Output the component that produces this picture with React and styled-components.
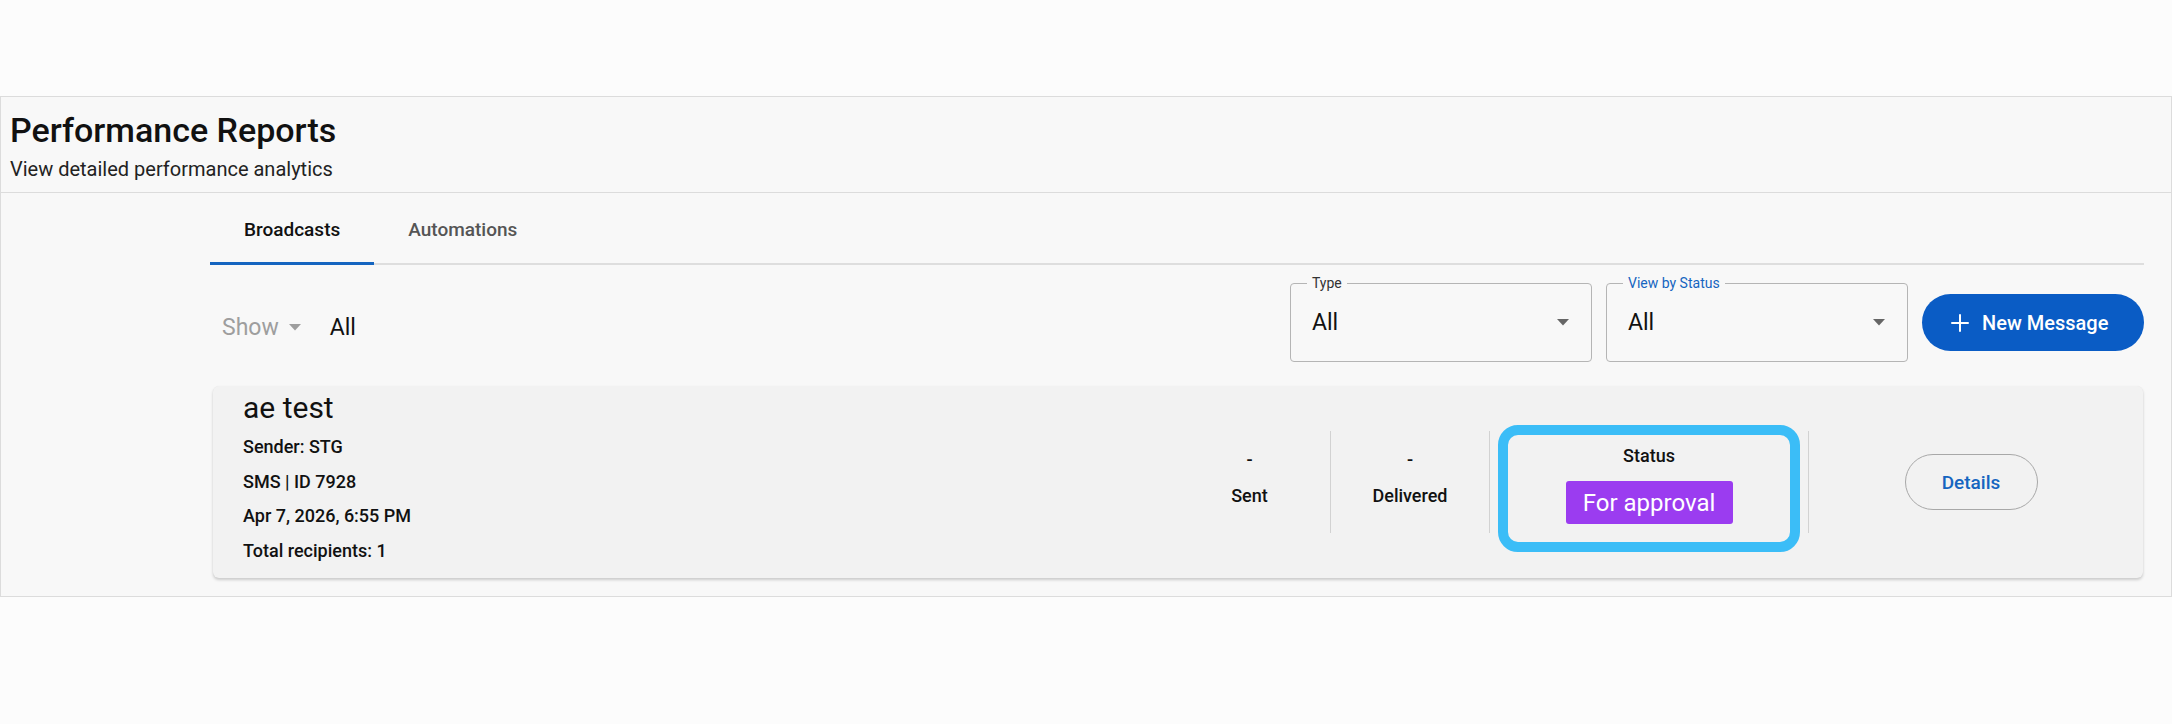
import React from 'react'
import styled, { createGlobalStyle } from 'styled-components'

const GlobalStyle = createGlobalStyle`
  html, body {
    margin: 0;
    padding: 0;
    background: #fcfcfc;
    font-family: Roboto, "Liberation Sans", Arial, sans-serif;
    color: #111;
  }
`

const report = {
  name: 'ae test',
  sender: 'STG',
  channel: 'SMS',
  id: 7928,
  sentAt: 'Apr 7, 2026, 6:55 PM',
  recipients: 1,
  sent: '-',
  delivered: '-',
  status: 'For approval',
}

const CaretDown = ({ color = '#666' }) => (
  <svg width="12" height="7" viewBox="0 0 12 7">
    <path d="M0 0 L12 0 L6 6.5 Z" fill={color} />
  </svg>
)

const PlusIcon = () => (
  <svg width="18" height="18" viewBox="0 0 18 18">
    <path d="M9 1 V17 M1 9 H17" stroke="#fff" strokeWidth="2" strokeLinecap="round" />
  </svg>
)

const App = () => {
  const [tab, setTab] = React.useState('broadcasts')

  return (
    <>
      <GlobalStyle />
      <Panel>
        <Header>
          <Title>Performance Reports</Title>
          <Subtitle>View detailed performance analytics</Subtitle>
        </Header>
        <Content>
          <TabBar>
            <Tab active={tab === 'broadcasts'} onClick={() => setTab('broadcasts')}>Broadcasts</Tab>
            <Tab active={tab === 'automations'} onClick={() => setTab('automations')}>Automations</Tab>
          </TabBar>

          <Toolbar>
            <ShowFilter>
              <ShowLabel>Show</ShowLabel>
              <CaretDown color="#9e9e9e" />
              <ShowValue>All</ShowValue>
            </ShowFilter>
            <Controls>
              <Selects>
                <Select>
                  <Legend>Type</Legend>
                  <SelectValue>All</SelectValue>
                  <CaretDown />
                </Select>
                <Select>
                  <Legend focused>View by Status</Legend>
                  <SelectValue>All</SelectValue>
                  <CaretDown />
                </Select>
              </Selects>
              <PrimaryButton>
                <PlusIcon />
                New Message
              </PrimaryButton>
            </Controls>
          </Toolbar>

          <Card>
            <Info>
              <Name>{report.name}</Name>
              <Meta>Sender: {report.sender}</Meta>
              <Meta>{report.channel} | ID {report.id}</Meta>
              <Meta>{report.sentAt}</Meta>
              <Meta>Total recipients: {report.recipients}</Meta>
            </Info>
            <Stat width={161}>
              <span>{report.sent}</span>
              <span>Sent</span>
            </Stat>
            <Divider />
            <Stat width={158}>
              <span>{report.delivered}</span>
              <span>Delivered</span>
            </Stat>
            <Divider />
            <StatusCell>
              <StatusBox>
                <StatusLabel>Status</StatusLabel>
                <Badge>{report.status}</Badge>
              </StatusBox>
            </StatusCell>
            <Divider />
            <Actions>
              <OutlineButton>Details</OutlineButton>
            </Actions>
          </Card>
        </Content>
      </Panel>
    </>
  )
}

const Panel = styled('div')`
  margin-top: 96px;
  background: #f8f8f8;
  border: 1px solid #dcdcdc;
  padding-bottom: 18px;
`

const Header = styled('div')`
  padding: 13px 9px 11px 9px;
  border-bottom: 1px solid #dcdcdc;
`

const Title = styled('h1')`
  margin: 0;
  font-size: 34px;
  line-height: 40px;
  font-weight: 500;
  color: #111;
`

const Subtitle = styled('div')`
  margin-top: 7px;
  font-size: 20px;
  line-height: 24px;
  color: #222;
`

const Content = styled('div')`
  padding: 0 27px 0 209px;
`

const TabBar = styled('div')`
  display: flex;
  padding-top: 26px;
  border-bottom: 2px solid #dedede;
`

const Tab = styled('div')`
  padding: 0 34px 21px 34px;
  font-size: 19px;
  line-height: 22px;
  font-weight: 500;
  color: ${(props) => (props.active ? '#111' : '#555')};
  border-bottom: 3px solid ${(props) => (props.active ? '#1565c0' : 'transparent')};
  margin-bottom: -2px;
  cursor: pointer;
`

const Toolbar = styled('div')`
  display: flex;
  align-items: center;
  justify-content: space-between;
  margin-top: 18px;
`

const ShowFilter = styled('div')`
  display: flex;
  align-items: center;
  gap: 10px;
  padding-left: 12px;
  padding-top: 9px;
`

const ShowLabel = styled('span')`
  font-size: 23px;
  color: #9e9e9e;
`

const ShowValue = styled('span')`
  margin-left: 19px;
  font-size: 23px;
  color: #111;
`

const Controls = styled('div')`
  display: flex;
  align-items: center;
  gap: 14px;
`

const Selects = styled('div')`
  display: flex;
  gap: 14px;
`

const Select = styled('div')`
  position: relative;
  width: 302px;
  height: 79px;
  box-sizing: border-box;
  border: 1px solid #b5b5b5;
  border-radius: 4px;
  display: flex;
  align-items: center;
  justify-content: space-between;
  padding: 0 22px 0 21px;
`

const Legend = styled('span')`
  position: absolute;
  top: -9px;
  left: 16px;
  padding: 0 5px;
  background: #f8f8f8;
  font-size: 14px;
  line-height: 16px;
  color: ${(props) => (props.focused ? '#1565c0' : '#333')};
`

const SelectValue = styled('span')`
  font-size: 23px;
  color: #111;
`

const PrimaryButton = styled('button')`
  display: flex;
  align-items: center;
  gap: 13px;
  width: 222px;
  height: 57px;
  padding: 0 0 0 29px;
  border: none;
  border-radius: 29px;
  background: #0a5cc5;
  color: #fff;
  font-family: inherit;
  font-size: 20px;
  font-weight: 500;
  cursor: pointer;
`

const Card = styled('div')`
  display: flex;
  align-items: center;
  margin: 24px 1px 0 3px;
  height: 192px;
  box-sizing: border-box;
  padding-left: 30px;
  background: #f2f2f2;
  border-radius: 6px;
  box-shadow: 0 2px 3px rgba(0, 0, 0, 0.18), 0 0 1px rgba(0, 0, 0, 0.06);
`

const Info = styled('div')`
  flex: 1;
  align-self: stretch;
  padding-top: 4px;
`

const Name = styled('div')`
  font-size: 30px;
  line-height: 36px;
  color: #111;
  margin-bottom: 4px;
`

const Meta = styled('div')`
  font-size: 18px;
  line-height: 34.5px;
  font-weight: 500;
  color: #111;
`

const Stat = styled('div')`
  width: ${(props) => props.width}px;
  display: flex;
  flex-direction: column;
  align-items: center;
  font-size: 18px;
  line-height: 36px;
  font-weight: 500;
  margin-bottom: 8px;
`

const Divider = styled('div')`
  width: 1px;
  height: 102px;
  background: #d2d2d2;
`

const StatusCell = styled('div')`
  width: 318px;
  display: flex;
  justify-content: center;
  padding-top: 13px;
`

const StatusBox = styled('div')`
  width: 302px;
  height: 127px;
  box-sizing: border-box;
  border: 10px solid #3bbdf7;
  border-radius: 20px;
  display: flex;
  flex-direction: column;
  align-items: center;
  padding-top: 10px;
`

const StatusLabel = styled('div')`
  font-size: 18px;
  line-height: 22px;
  font-weight: 500;
`

const Badge = styled('div')`
  margin-top: 14px;
  width: 167px;
  height: 43px;
  display: flex;
  align-items: center;
  justify-content: center;
  background: #9b3cf0;
  border-radius: 3px;
  color: #fff;
  font-size: 24px;
`

const Actions = styled('div')`
  width: 334px;
  display: flex;
  justify-content: center;
  padding-right: 10px;
  box-sizing: border-box;
`

const OutlineButton = styled('button')`
  width: 133px;
  height: 56px;
  border: 1.5px solid #a8a8a8;
  border-radius: 28px;
  background: transparent;
  color: #1565c0;
  font-family: inherit;
  font-size: 19px;
  font-weight: 500;
  cursor: pointer;
`

export default App
